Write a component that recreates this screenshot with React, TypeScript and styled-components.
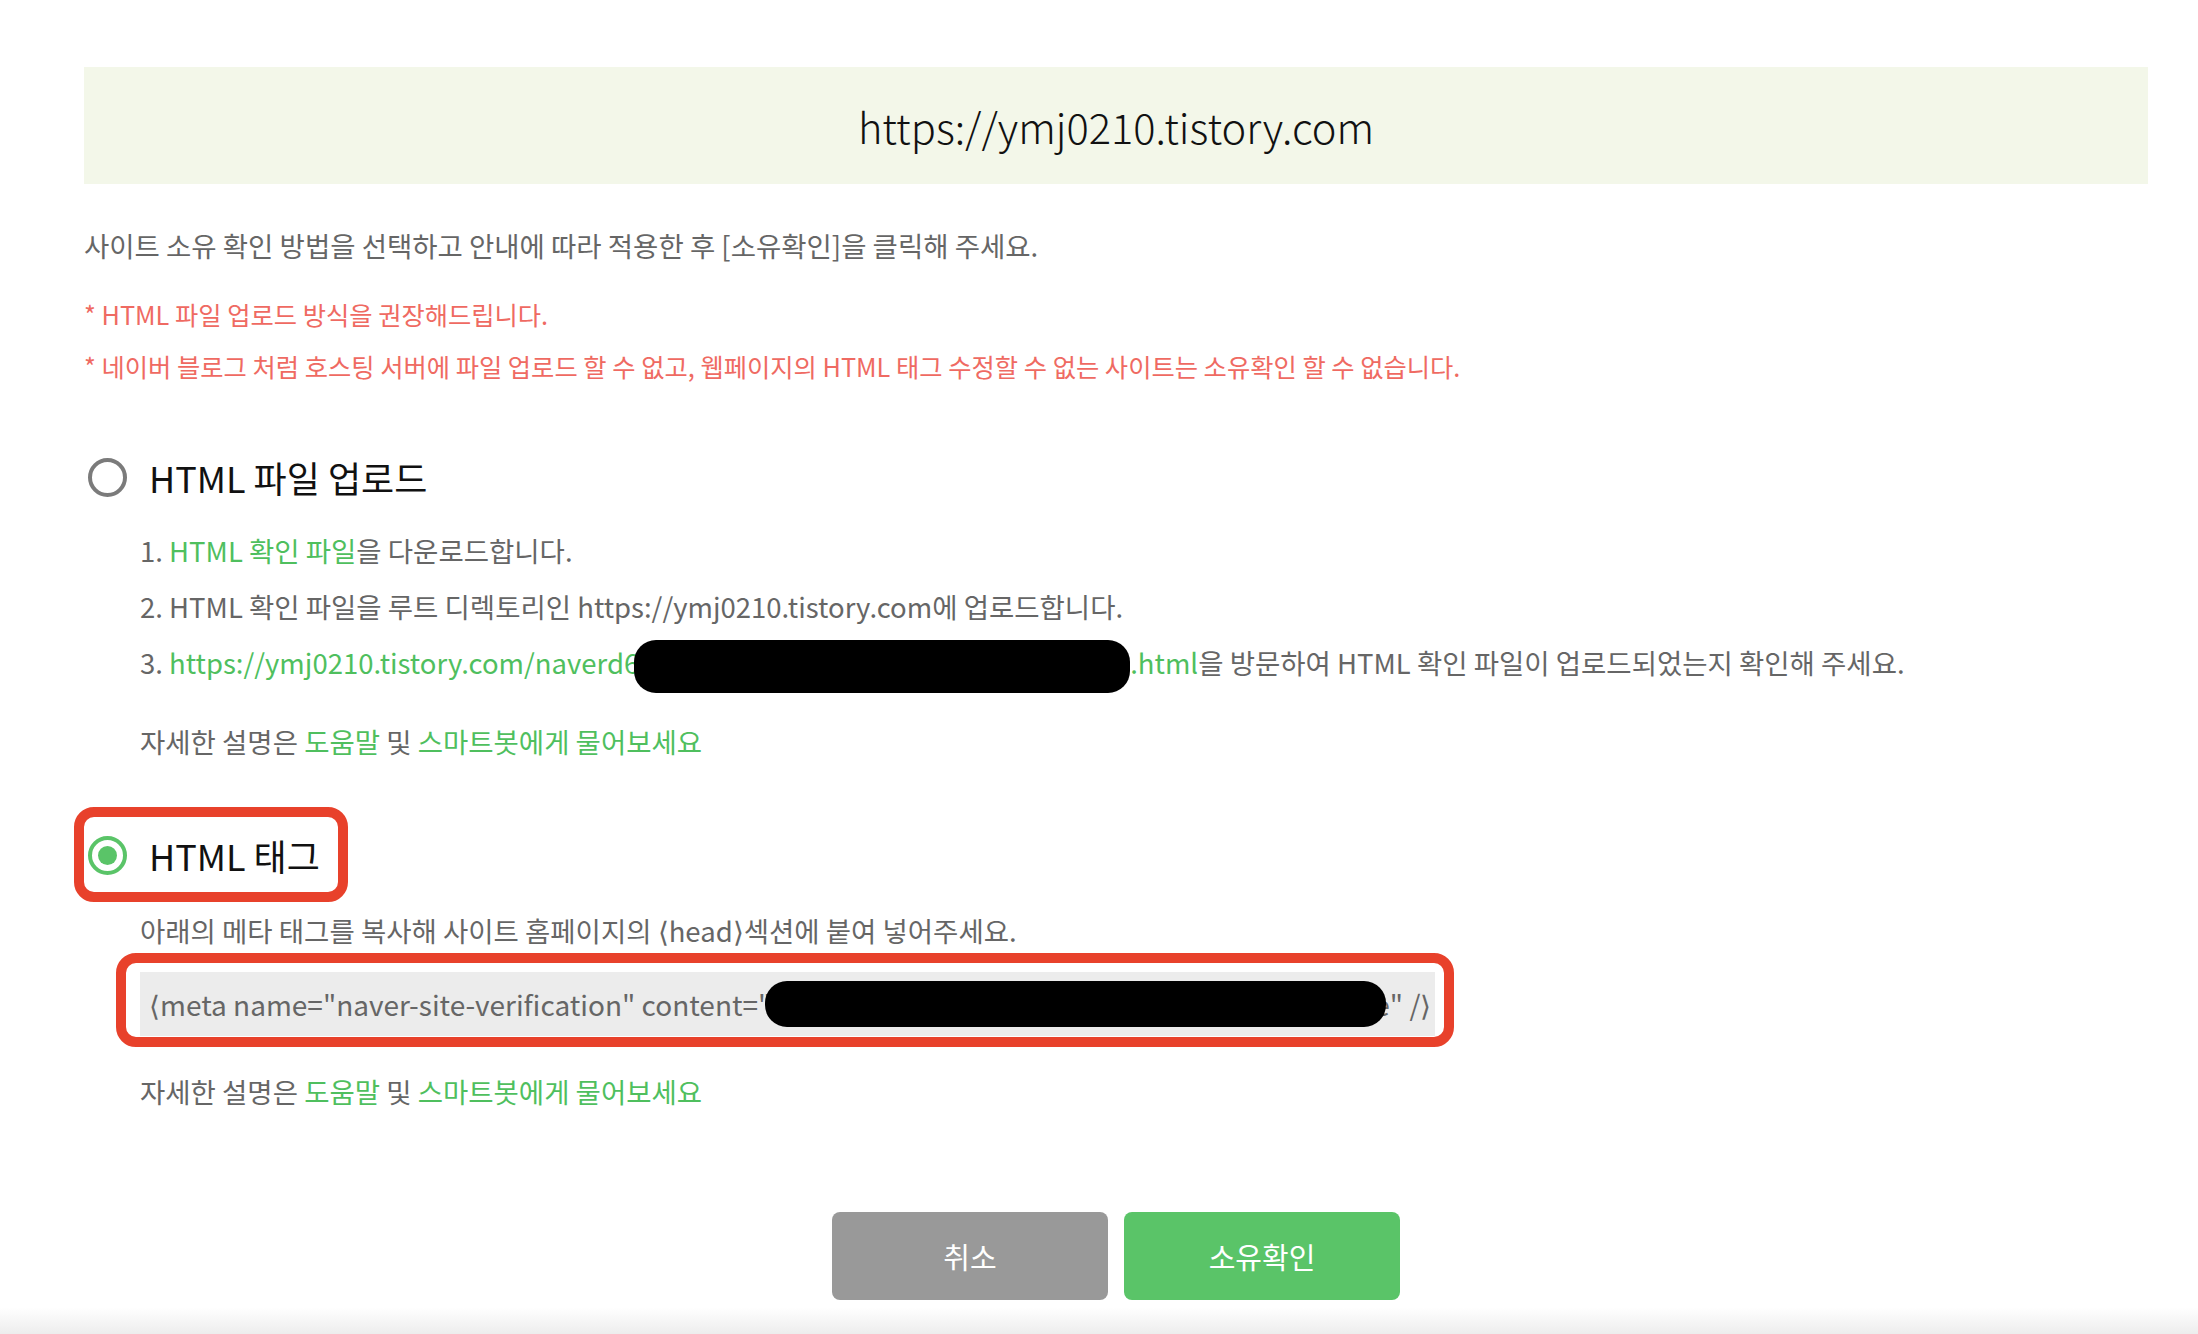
import React from 'react';
import styled, { createGlobalStyle } from 'styled-components';

const GlobalStyle = createGlobalStyle`
  html, body {
    margin: 0;
    padding: 0;
    background: #fff;
  }
  body {
    font-family: 'Noto Sans CJK KR', 'Noto Sans', sans-serif;
    color: #666;
  }
  * {
    box-sizing: border-box;
  }
`;

const SITE = 'https://ymj0210.tistory.com';

const HelpLine = () => (
  <Help>
    자세한 설명은 <Green>도움말</Green> 및 <Green>스마트봇에게 물어보세요</Green>
  </Help>
);

const App = () => {
  return (
    <Page>
      <GlobalStyle />
      <Content>
        <SiteBox>{SITE}</SiteBox>
        <Intro>사이트 소유 확인 방법을 선택하고 안내에 따라 적용한 후 [소유확인]을 클릭해 주세요.</Intro>
        <Notes>
          <Note>* HTML 파일 업로드 방식을 권장해드립니다.</Note>
          <Note>
            * 네이버 블로그 처럼 호스팅 서버에 파일 업로드 할 수 없고, 웹페이지의 HTML 태그 수정할 수 없는
            사이트는 소유확인 할 수 없습니다.
          </Note>
        </Notes>

        <Option>
          <Radio />
          <OptionLabel>HTML 파일 업로드</OptionLabel>
        </Option>
        <Steps>
          <li>
            1. <Green>HTML 확인 파일</Green>을 다운로드합니다.
          </li>
          <li>2. HTML 확인 파일을 루트 디렉토리인 {SITE}에 업로드합니다.</li>
          <li>
            3. <Green>{SITE}/naverd6</Green>
            <Redact $w={496} $h={53} $ml={-5} />
            <Green>.html</Green>을 방문하여 HTML 확인 파일이 업로드되었는지 확인해 주세요.
          </li>
        </Steps>
        <HelpLine />

        <Marked>
          <Option $tight>
            <Radio $checked />
            <OptionLabel>HTML 태그</OptionLabel>
          </Option>
        </Marked>
        <Instruction>아래의 메타 태그를 복사해 사이트 홈페이지의 ⟨head⟩섹션에 붙여 넣어주세요.</Instruction>
        <MarkedField>
          <MetaField>
            ⟨meta name="naver-site-verification" content="
            <Redact $w={621} $h={46} $ml={-6} $mr={-12} />
            e" /⟩
          </MetaField>
        </MarkedField>
        <HelpLine />
      </Content>

      <ButtonBar>
        <Button $variant="cancel">취소</Button>
        <Button $variant="confirm">소유확인</Button>
      </ButtonBar>
    </Page>
  );
};

export default App;

const Page = styled.div`
  min-height: 1334px;
  display: flex;
  flex-direction: column;
`;

const Content = styled.div`
  padding: 67px 50px 0 84px;
  display: flex;
  flex-direction: column;
  align-items: flex-start;
`;

const SiteBox = styled.div`
  width: 100%;
  height: 117px;
  background: #f3f7e9;
  display: flex;
  align-items: center;
  justify-content: center;
  font-size: 41.6px;
  font-weight: 300;
  color: #111;
`;

const Intro = styled.p`
  margin: 41px 0 0;
  font-size: 27.5px;
  line-height: 40px;
  color: #666;
`;

const Notes = styled.div`
  margin-top: 23px;
`;

const Note = styled.p`
  margin: 0;
  font-size: 25.3px;
  line-height: 52px;
  color: #ef6a62;
`;

const Option = styled.div<{ $tight?: boolean }>`
  display: flex;
  align-items: center;
  gap: 22px;
  height: 40px;
  margin-top: ${({ $tight }) => ($tight ? 0 : 65)}px;
  margin-left: 4px;
`;

const Radio = styled.span<{ $checked?: boolean }>`
  width: 39px;
  height: 39px;
  border-radius: 50%;
  border: 4px solid ${({ $checked }) => ($checked ? '#5ac468' : '#7b7b7b')};
  display: flex;
  align-items: center;
  justify-content: center;
  &::after {
    content: '';
    display: ${({ $checked }) => ($checked ? 'block' : 'none')};
    width: 19px;
    height: 19px;
    border-radius: 50%;
    background: #5ac468;
  }
`;

const OptionLabel = styled.span`
  font-size: 36px;
  color: #111;
`;

const Steps = styled.ol`
  list-style: none;
  margin: 25px 0 0;
  padding: 0 0 0 56px;
  font-size: 27.5px;
  line-height: 56px;
  color: #666;
  li {
    white-space: nowrap;
  }
`;

const Green = styled.span`
  color: #4fbf5e;
`;

const Redact = styled.span<{ $w: number; $h: number; $ml?: number; $mr?: number }>`
  position: relative;
  z-index: 1;
  display: inline-block;
  vertical-align: middle;
  width: ${({ $w }) => $w}px;
  height: ${({ $h }) => $h}px;
  margin-left: ${({ $ml }) => $ml ?? 0}px;
  margin-right: ${({ $mr }) => $mr ?? 0}px;
  border-radius: 22px;
  background: #000;
`;

const Help = styled.p`
  margin: 28px 0 0 56px;
  font-size: 27.5px;
  line-height: 40px;
  color: #666;
`;

const Marked = styled.div`
  margin-top: 46px;
  margin-left: -10px;
  border: 10px solid #e8412b;
  border-radius: 20px;
  padding: 18px 18px 17px 0;
`;

const Instruction = styled.p`
  margin: 8px 0 0 56px;
  font-size: 27.5px;
  line-height: 40px;
  color: #666;
`;

const MarkedField = styled.div`
  margin: 3px 0 0 32px;
  width: 1338px;
  border: 10px solid #e8412b;
  border-radius: 20px;
  padding: 9px 9px 1px 14px;
  & + p {
    margin-top: 24px;
  }
`;

const MetaField = styled.div`
  height: 64px;
  background: #ececec;
  padding-left: 9px;
  display: flex;
  align-items: center;
  white-space: pre;
  font-size: 28px;
  color: #666;
`;

const ButtonBar = styled.div`
  margin-top: auto;
  padding: 0 50px 34px 84px;
  display: flex;
  justify-content: center;
  gap: 16px;
  background: linear-gradient(to bottom, #fff 0%, #fff 78%, #ededed 100%);
`;

const Button = styled.button<{ $variant: 'cancel' | 'confirm' }>`
  width: 276px;
  height: 88px;
  border: none;
  border-radius: 8px;
  background: ${({ $variant }) => ($variant === 'confirm' ? '#5ac468' : '#999')};
  color: #fff;
  font-family: 'Noto Sans CJK KR', 'Noto Sans', sans-serif;
  font-size: 29px;
  cursor: pointer;
`;
